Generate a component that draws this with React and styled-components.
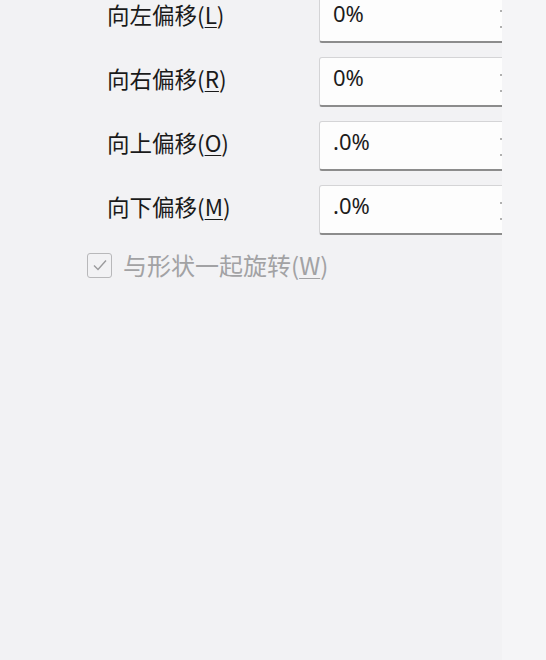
import React from 'react'
import styled, { createGlobalStyle } from 'styled-components'

const Global = createGlobalStyle`
  body {
    margin: 0;
    background: #f2f2f4;
    font-family: "Noto Sans", "Noto Sans CJK SC", sans-serif;
  }
`

const Page = styled.div`
  display: flex;
  width: 546px;
  height: 660px;
  overflow: hidden;
`

const Pane = styled.div`
  width: 502px;
  flex-shrink: 0;
  overflow: hidden;
  background: #f2f2f4;
`

const Side = styled.div`
  flex: 1;
  background: #f5f5f7;
`

const Fields = styled.div`
  display: flex;
  flex-direction: column;
  gap: 14px;
  margin-top: -7px;
  padding-left: 107px;
`

const Row = styled.div`
  display: grid;
  grid-template-columns: 212px 200px;
  align-items: center;
`

const Label = styled.label`
  font-family: "Noto Sans CJK SC", "Noto Sans", sans-serif;
  font-size: 22.5px;
  color: #1a1a1a;
  line-height: 1;
  padding-bottom: 8px;
  u {
    text-decoration-thickness: 1px;
    text-underline-offset: 3px;
  }
`

const Box = styled.div`
  position: relative;
  height: 50px;
  box-sizing: border-box;
  background: #fdfdfd;
  border: 1px solid #d4d4d6;
  border-bottom: 2px solid #8c8c8c;
  border-radius: 3px 0 0 3px;
  padding: 4px 0 0 13px;
  font-size: 22px;
  color: #1c1c1c;
`

const Dot = styled.span`
  position: absolute;
  left: 180px;
  top: ${p => p.$top}px;
  width: 2px;
  height: 2px;
  background: #b0b0b0;
`

const Check = styled.div`
  display: flex;
  align-items: center;
  gap: 11px;
  margin: 16px 0 0 87px;
  color: #a2a2a4;
  font-family: "Noto Sans CJK SC", "Noto Sans", sans-serif;
  font-size: 24px;
  line-height: 1.2;
  u {
    text-decoration-thickness: 1px;
    text-underline-offset: 3px;
  }
`

const Square = styled.span`
  width: 25px;
  height: 25px;
  box-sizing: border-box;
  border: 1px solid #b8b8ba;
  border-radius: 3px;
  display: flex;
  align-items: center;
  justify-content: center;
`

const fields = [
  { name: '向左偏移', key: 'L', value: '0%' },
  { name: '向右偏移', key: 'R', value: '0%' },
  { name: '向上偏移', key: 'O', value: '.0%' },
  { name: '向下偏移', key: 'M', value: '.0%' },
]

const App = () => {
  return (
    <Page>
      <Global />
      <Pane>
        <Fields>
          {fields.map(f => (
            <Row key={f.key}>
              <Label>{f.name}(<u>{f.key}</u>)</Label>
              <Box>
                {f.value}
                <Dot $top={16} />
                <Dot $top={32} />
              </Box>
            </Row>
          ))}
        </Fields>
        <Check>
          <Square>
            <svg width="18" height="18" viewBox="0 0 18 18" fill="none">
              <path d="M3 9.5 L7 13.5 L15 4.5" stroke="#9a9a9c" strokeWidth="1.4" />
            </svg>
          </Square>
          <span>与形状一起旋转(<u>W</u>)</span>
        </Check>
      </Pane>
      <Side />
    </Page>
  )
}

export default App
